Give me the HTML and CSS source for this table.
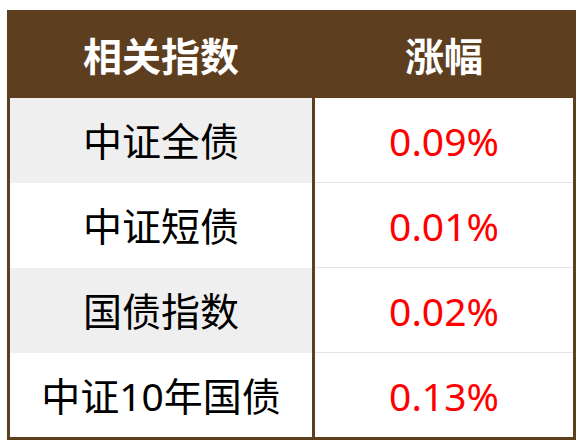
FILE: index.html
```html
<!DOCTYPE html>
<html lang="zh">
<head>
<meta charset="utf-8">
<link rel="stylesheet" href="styles.css">
</head>
<body>
<div class="board">
  <div class="row head">
    <div class="cell name">相关指数</div>
    <div class="cell val">涨幅</div>
  </div>
  <div class="row shade">
    <div class="cell name">中证全债</div>
    <div class="cell val">0.09%</div>
  </div>
  <div class="row">
    <div class="cell name">中证短债</div>
    <div class="cell val">0.01%</div>
  </div>
  <div class="row shade">
    <div class="cell name">国债指数</div>
    <div class="cell val">0.02%</div>
  </div>
  <div class="row last">
    <div class="cell name">中证10年国债</div>
    <div class="cell val">0.13%</div>
  </div>
</div>
</body>
</html>
```
FILE: styles.css
```css
html, body {
  margin: 0;
  padding: 0;
  background: #ffffff;
}
body {
  padding: 10px 3px 4px 7px;
  font-family: "Noto Sans", "Noto Sans CJK SC", sans-serif;
}
.board {
  width: 563px;
  border: 3px solid #5d3e1f;
  background: #5d3e1f;
  display: flex;
  flex-direction: column;
}
.row {
  display: grid;
  grid-template-columns: 302px 258px;
  column-gap: 3px;
  height: 85px;
}
.row.last {
  height: 84px;
}
.cell {
  display: flex;
  align-items: center;
  justify-content: center;
  font-size: 39px;
  line-height: 1;
  box-sizing: border-box;
}
.name {
  background: #ffffff;
  color: #000000;
}
.val {
  background: #ffffff;
  color: #ff0000;
  border-bottom: 1px solid #e3e3e3;
}
.row.last .val {
  border-bottom: none;
}
.row.shade .name {
  background: #efefef;
}
.head .cell {
  background: #5d3e1f;
  color: #ffffff;
  font-weight: 700;
  border-bottom: none;
}
```
